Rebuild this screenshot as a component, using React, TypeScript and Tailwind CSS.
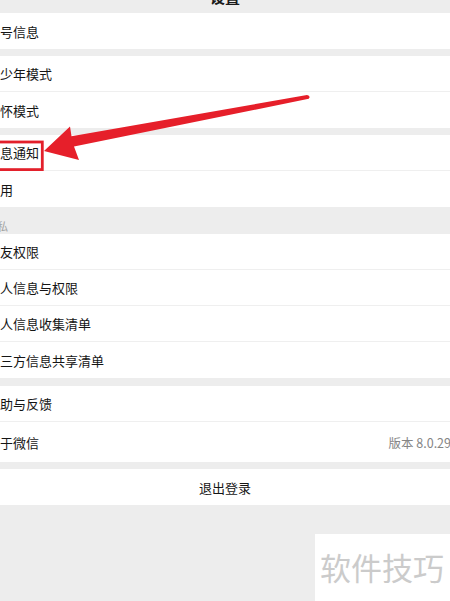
import React from "react";

type RowProps = { text: string; right?: string; last?: boolean; tall?: boolean };

function Row({ text, right, last, tall }: RowProps) {
  return (
    <div
      className={`flex items-center justify-between bg-white ${tall ? "h-[40px]" : "h-[36px]"} ${
        last ? "" : "border-b border-[#efefef]"
      }`}
    >
      <span className="ml-[-13px] whitespace-nowrap text-[13px] leading-[13px] text-[#151515]">{text}</span>
      {right && (
        <span className="mr-[-1px] whitespace-nowrap text-[12.5px] leading-[13px] text-[#858585]">{right}</span>
      )}
    </div>
  );
}

function Group({ children }: { children: React.ReactNode }) {
  return <div className="flex flex-col">{children}</div>;
}

export default function App() {
  return (
    <div className="relative h-[601px] w-[450px] overflow-hidden bg-[#ededed] font-['Noto_Sans_CJK_SC','Noto_Sans',sans-serif]">
      <div className="flex flex-col">
        {/* header */}
        <div className="flex h-[13px] justify-center overflow-hidden">
          <span className="mt-[-11px] text-[15px] font-semibold leading-[15px] text-[#1a1a1a]">设置</span>
        </div>

        <Group>
          <Row text="账号信息" last />
        </Group>

        <div className="h-[7px]" />

        <Group>
          <Row text="青少年模式" />
          <Row text="关怀模式" last />
        </Group>

        <div className="h-[7px]" />

        <Group>
          <Row text="消息通知" />
          <Row text="通用" last />
        </Group>

        <div className="flex h-[27px] items-start pt-[14px]">
          <span className="ml-[-14px] text-[11px] leading-[11px] text-[#a3a3a3]">隐私</span>
        </div>

        <Group>
          <Row text="朋友权限" />
          <Row text="个人信息与权限" />
          <Row text="个人信息收集清单" />
          <Row text="第三方信息共享清单" last />
        </Group>

        <div className="h-[8px]" />

        <Group>
          <Row text="帮助与反馈" />
          <Row text="关于微信" right="版本 8.0.29" last tall />
        </Group>

        <div className="h-[7px]" />

        <div className="flex h-[36px] items-center justify-center bg-white">
          <span className="text-[13px] leading-[13px] text-[#151515]">退出登录</span>
        </div>
      </div>

      {/* red annotation overlay */}
      <svg
        className="pointer-events-none absolute left-0 top-0"
        width="450"
        height="601"
        viewBox="0 0 450 601"
      >
        <rect x="-5" y="142" width="47.3" height="27.6" fill="none" stroke="#e3202b" strokeWidth="2.8" />
        <path
          d="M44 151 L70 126.5 L71.5 136.2 L307 95 Q310 95.5 309.5 97.5 Q309 99 307.5 99 L74 146.5 L79 160 Z"
          fill="#e61f2a"
        />
      </svg>

      {/* watermark */}
      <div className="absolute left-[315px] top-[534px] flex h-[67px] w-[135px] items-start bg-white pl-[5px] pt-[16px]">
        <span className="whitespace-nowrap text-[31px] leading-[34px] text-[#cbcbcb]">软件技巧</span>
      </div>
    </div>
  );
}
